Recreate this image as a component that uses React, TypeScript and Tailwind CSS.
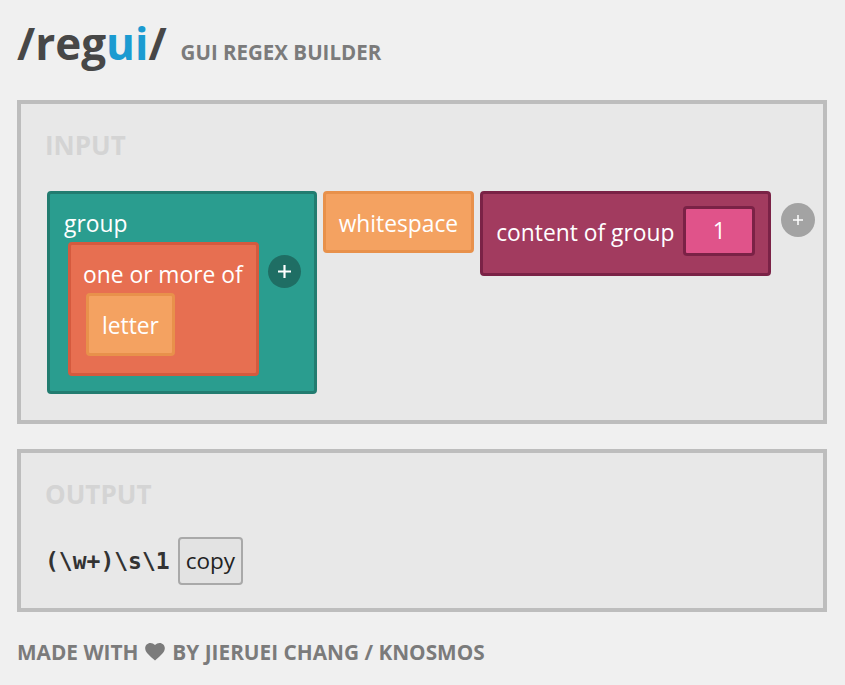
function Plus({ size, stroke }: { size: number; stroke: number }) {
  return (
    <svg width={size} height={size} viewBox="0 0 12 12" className="block">
      <path d="M6 0v12M0 6h12" stroke="#fff" strokeWidth={stroke} />
    </svg>
  );
}

export default function App() {
  return (
    <div className="min-h-screen bg-[#f0f0f0] px-[17px] pt-[13px] font-['Open_Sans',sans-serif]">
      <header className="flex items-baseline">
        <h1 className="text-[44px] leading-[60px] font-bold text-[#474747]">
          /reg<span className="text-[#1b9bd1]">ui</span>/
        </h1>
        <span className="ml-[14px] text-[20.5px] font-bold text-[#7b7b7b]">GUI REGEX BUILDER</span>
      </header>

      {/* input panel */}
      <section className="mt-[27px] w-[810px] border-4 border-[#bdbdbd] bg-[#e8e8e8] px-[24px] pt-[23px] pb-[26px]">
        <h2 className="text-[26px] leading-[36px] font-bold text-[#d4d4d4]">INPUT</h2>
        <div className="mt-[28px] ml-[2px] flex items-start whitespace-nowrap text-[22.8px] leading-[30px] text-white">
          <div className="shrink-0 rounded-[4px] border-[3px] border-[#227c70] bg-[#2a9d8f] pl-[14px] pr-[13px] pt-[15px] pb-[15px]">
            <div>group</div>
            <div className="mt-[3px] ml-[4px] flex items-start">
              <div className="shrink-0 rounded-[4px] border-[3px] border-[#d55a3e] bg-[#e76f51] pl-[12px] pr-[13px] pt-[15px] pb-[17px]">
                <div>one or more of</div>
                <div className="mt-[3px] ml-[3px] flex">
                  <div className="rounded-[4px] border-[3px] border-[#e8914b] bg-[#f4a261] px-[13px] pt-[15px] pb-[12px]">
                    letter
                  </div>
                </div>
              </div>
              <button className="ml-[9px] mt-[13px] flex h-[33px] w-[33px] shrink-0 items-center justify-center rounded-full bg-[#1f6e64]">
                <Plus size={13} stroke={2} />
              </button>
            </div>
          </div>

          <div className="ml-[6px] shrink-0 rounded-[4px] border-[3px] border-[#e8914b] bg-[#f4a261] px-[13px] pt-[15px] pb-[11px]">
            whitespace
          </div>

          <div className="ml-[6px] flex shrink-0 items-center rounded-[4px] border-[3px] border-[#7a2246] bg-[#a23b5f] px-[13px] pt-[12px] pb-[17px]">
            <span className="pt-[3px]">content of group</span>
            <div className="ml-[9px] flex h-[50px] w-[72px] items-center justify-center rounded-[4px] border-[3px] border-[#7a2246] bg-[#e0538a]">
              1
            </div>
          </div>

          <button className="ml-[10px] mt-[12px] flex h-[34px] w-[34px] shrink-0 items-center justify-center rounded-full bg-[#a3a3a3]">
            <Plus size={10} stroke={1.8} />
          </button>
        </div>
      </section>

      {/* output panel */}
      <section className="mt-[25px] w-[810px] border-4 border-[#bdbdbd] bg-[#e8e8e8] px-[24px] pt-[23px] pb-[23px]">
        <h2 className="text-[26px] leading-[36px] font-bold text-[#d4d4d4]">OUTPUT</h2>
        <div className="mt-[25px] flex items-baseline">
          <code className="font-['DejaVu_Sans_Mono',monospace] text-[23px] font-bold text-[#333]">
            {"(\\w+)\\s\\1"}
          </code>
          <button className="ml-[8px] rounded-[4px] border-[2.5px] border-[#a9a9a9] bg-[#e3e3e3] px-[6px] py-[7px] text-[22.5px] leading-[30px] text-[#222]">
            copy
          </button>
        </div>
      </section>

      <footer className="mt-[26px] flex items-center text-[20.8px] leading-[28px] font-bold text-[#7b7b7b]">
        <span>MADE WITH</span>
        <svg width="20" height="18" viewBox="0 0 24 22" className="mx-[7px]">
          <path
            d="M12 21.5l-1.7-1.5C4.2 14.5 0 10.8 0 6.4 0 2.8 2.8 0 6.4 0c2 0 4 .9 5.6 2.4C13.6.9 15.6 0 17.6 0 21.2 0 24 2.8 24 6.4c0 4.4-4.2 8.1-10.3 13.6L12 21.5z"
            fill="#7b7b7b"
          />
        </svg>
        <span>BY JIERUEI CHANG / KNOSMOS</span>
      </footer>
    </div>
  );
}
